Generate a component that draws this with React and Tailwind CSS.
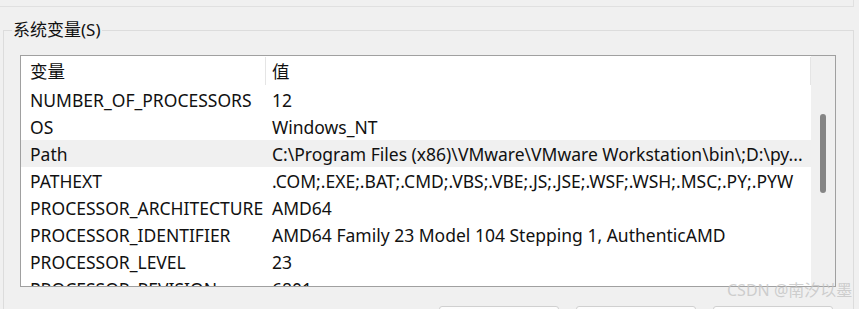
import React from 'react'

const rows = [
  ['NUMBER_OF_PROCESSORS', '12'],
  ['OS', 'Windows_NT'],
  ['Path', 'C:\\Program Files (x86)\\VMware\\VMware Workstation\\bin\\;D:\\py...', true],
  ['PATHEXT', '.COM;.EXE;.BAT;.CMD;.VBS;.VBE;.JS;.JSE;.WSF;.WSH;.MSC;.PY;.PYW'],
  ['PROCESSOR_ARCHITECTURE', 'AMD64'],
  ['PROCESSOR_IDENTIFIER', 'AMD64 Family 23 Model 104 Stepping 1, AuthenticAMD'],
  ['PROCESSOR_LEVEL', '23'],
  ['PROCESSOR_REVISION', '6801'],
]

const font = { fontFamily: '"Noto Sans", "Noto Sans CJK SC", sans-serif' }

export default function App() {
  return (
    <div className="relative w-[859px] h-[309px] overflow-hidden bg-[#f0f0f0] text-[#111]" style={font}>
      <div className="h-[7px] w-[854px] border-b border-r border-[#e0e0e0]" />

      <div className="relative mt-[23px] ml-[3px] w-[851px] h-[300px] border-t border-l border-r border-[#dcdcdc]">
        <span className="absolute left-[8px] top-[-12px] px-[1px] bg-[#f0f0f0] text-[17px] leading-[22px]">系统变量(S)</span>

        <div className="mt-[24px] ml-[16px] w-[816px] h-[232px] border border-[#a0a0a0] bg-white flex overflow-hidden">
          <div className="w-[790px] text-[17.5px] leading-[22px]">
            <div className="flex h-[30px]">
              <div className="w-[244px] pl-[9px] flex items-center">变量</div>
              <div className="w-px my-[1px] bg-[#e5e5e5]" />
              <div className="flex-1 pl-[6px] flex items-center">值</div>
              <div className="w-px my-[1px] bg-[#e5e5e5]" />
            </div>
            {rows.map(([name, value, active]) => (
              <div key={name} className={`flex h-[27px] items-center whitespace-nowrap ${active ? 'bg-[#f0f0f0]' : ''}`}>
                <div className="w-[245px] pl-[9px] overflow-hidden">{name}</div>
                <div className="flex-1 pl-[6px] overflow-hidden">{value}</div>
              </div>
            ))}
          </div>
          <div className="w-[24px] bg-[#f0f0f0] flex justify-center">
            <div className="mt-[58px] w-[6px] h-[79px] rounded-[3px] bg-[#858585]" />
          </div>
        </div>

        <div className="mt-[19px] flex justify-end gap-[17px] pr-[20px]">
          <div className="w-[120px] h-[24px] border border-[#d0d0d0] bg-[#fdfdfd] rounded-[3px]" />
          <div className="w-[120px] h-[24px] border border-[#d0d0d0] bg-[#fdfdfd] rounded-[3px]" />
          <div className="w-[120px] h-[24px] border border-[#d0d0d0] bg-[#fdfdfd] rounded-[3px]" />
        </div>
      </div>

      <div className="absolute left-[727px] top-[279px] text-[16px] leading-[22px] text-[#c4c4c4]/80 whitespace-nowrap">CSDN @南汐以墨</div>
    </div>
  )
}
